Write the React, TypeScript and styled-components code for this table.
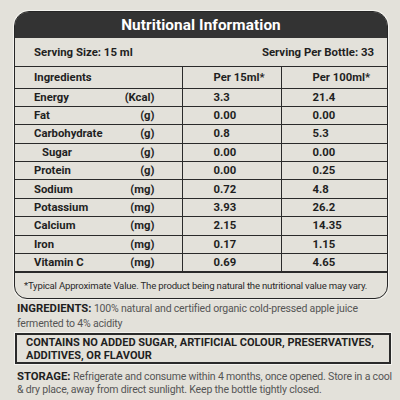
import React from 'react';
import styled, { createGlobalStyle } from 'styled-components';

const Global = createGlobalStyle`
  html, body { margin: 0; padding: 0; background: #e3e1da; }
  body { font-family: Roboto, "Liberation Sans", Arial, sans-serif; color: #1f1f1f; }
`;

const Page = styled.div`
  width: 400px;
  height: 400px;
  box-sizing: border-box;
  padding: 11px 8px 0 14px;
  overflow: hidden;
`;

const Card = styled.section`
  width: 374px;
  box-sizing: border-box;
  border: 1.5px solid #262626;
  border-radius: 15px 15px 13px 13px;
  overflow: hidden;
  box-shadow: 0 0 0 1px #f4f3ef;
`;

const Header = styled.h1`
  margin: 0;
  height: 26px;
  display: flex;
  align-items: center;
  justify-content: center;
  background: #333333;
  color: #ffffff;
  font-size: 15.3px;
  font-weight: 700;
  letter-spacing: 0.1px;
`;

const ServingRow = styled.div`
  height: 28px;
  display: flex;
  align-items: center;
  justify-content: space-between;
  padding: 0 13px 0 19px;
  border-bottom: 1px solid #2a2a2a;
  font-size: 11.4px;
  font-weight: 700;
`;

const Table = styled.table`
  width: 100%;
  border-collapse: collapse;
  table-layout: fixed;
  font-size: 11.3px;
  font-weight: 700;
`;

const Row = styled.tr<{ $head?: boolean }>`
  height: ${p => (p.$head ? '21px' : '18.4px')};
`;

const Cell = styled.td<{ $pad: number }>`
  padding: 0 0 0 ${p => p.$pad}px;
  border: 1px solid #2a2a2a;
  text-align: left;
  vertical-align: middle;
  white-space: nowrap;
  &:first-child { border-left: none; }
  &:last-child { border-right: none; }
  tr:first-child > & { border-top: none; }
`;

const NameCell = styled.div<{ $indent?: boolean }>`
  display: flex;
  justify-content: space-between;
  padding-left: ${p => (p.$indent ? '8px' : '0')};
  padding-right: 27px;
`;

const Footnote = styled.div`
  height: 25px;
  display: flex;
  align-items: center;
  padding-left: 9px;
  border-top: 1px solid #2a2a2a;
  font-size: 9.6px;
  font-weight: 400;
  color: #2a2a2a;
  letter-spacing: -0.2px;
`;

const Para = styled.p`
  margin: 2px 0 0 3px;
  width: 378px;
  font-size: 10.5px;
  line-height: 15px;
  letter-spacing: -0.18px;
  color: #555;
  white-space: nowrap;
`;

const Label = styled.strong`
  color: #1f1f1f;
  font-weight: 700;
  font-size: 11.3px;
  letter-spacing: 0;
`;

const Body = styled.span`
  color: #555;
`;

const NoticeBox = styled.div`
  margin: 2px 0 0 1px;
  width: 376px;
  box-sizing: border-box;
  height: 31px;
  border: 2px solid #2a2a2a;
  padding: 1px 0 0 9px;
  font-size: 11px;
  line-height: 13px;
  font-weight: 700;
  color: #1f1f1f;
  box-shadow: 0 0 0 1px #f4f3ef;
`;

const StoragePara = styled(Para)`
  margin-top: 6px;
  line-height: 13px;
`;

type Nut = { name: string; unit: string; a: string; b: string; indent?: boolean };

const rows: Nut[] = [
  { name: 'Energy', unit: '(Kcal)', a: '3.3', b: '21.4' },
  { name: 'Fat', unit: '(g)', a: '0.00', b: '0.00' },
  { name: 'Carbohydrate', unit: '(g)', a: '0.8', b: '5.3' },
  { name: 'Sugar', unit: '(g)', a: '0.00', b: '0.00', indent: true },
  { name: 'Protein', unit: '(g)', a: '0.00', b: '0.25' },
  { name: 'Sodium', unit: '(mg)', a: '0.72', b: '4.8' },
  { name: 'Potassium', unit: '(mg)', a: '3.93', b: '26.2' },
  { name: 'Calcium', unit: '(mg)', a: '2.15', b: '14.35' },
  { name: 'Iron', unit: '(mg)', a: '0.17', b: '1.15' },
  { name: 'Vitamin C', unit: '(mg)', a: '0.69', b: '4.65' },
];

export default function App() {
  return (
    <Page>
      <Global />
      <Card>
        <Header>Nutritional Information</Header>
        <ServingRow>
          <span>Serving Size: 15 ml</span>
          <span>Serving Per Bottle: 33</span>
        </ServingRow>
        <Table>
          <colgroup>
            <col style={{ width: '167px' }} />
            <col style={{ width: '99px' }} />
            <col />
          </colgroup>
          <tbody>
            <Row $head>
              <Cell $pad={19}>Ingredients</Cell>
              <Cell $pad={31}>Per 15ml*</Cell>
              <Cell $pad={31}>Per 100ml*</Cell>
            </Row>
            {rows.map(r => (
              <Row key={r.name}>
                <Cell $pad={19}>
                  <NameCell $indent={r.indent}>
                    <span>{r.name}</span>
                    <span>{r.unit}</span>
                  </NameCell>
                </Cell>
                <Cell $pad={31}>{r.a}</Cell>
                <Cell $pad={31}>{r.b}</Cell>
              </Row>
            ))}
          </tbody>
        </Table>
        <Footnote>
          *Typical Approximate Value. The product being natural the nutritional value may vary.
        </Footnote>
      </Card>
      <Para>
        <Label>INGREDIENTS:</Label>{' '}
        <Body>100% natural and certified organic cold-pressed apple juice</Body>
        <br />
        <Body>fermented to 4% acidity</Body>
      </Para>
      <NoticeBox>
        CONTAINS NO ADDED SUGAR, ARTIFICIAL COLOUR, PRESERVATIVES,
        <br />
        ADDITIVES, OR FLAVOUR
      </NoticeBox>
      <StoragePara>
        <Label>STORAGE:</Label>{' '}
        <Body>Refrigerate and consume within 4 months, once opened. Store in a cool</Body>
        <br />
        <Body>&amp; dry place, away from direct sunlight. Keep the bottle tightly closed.</Body>
      </StoragePara>
    </Page>
  );
}
